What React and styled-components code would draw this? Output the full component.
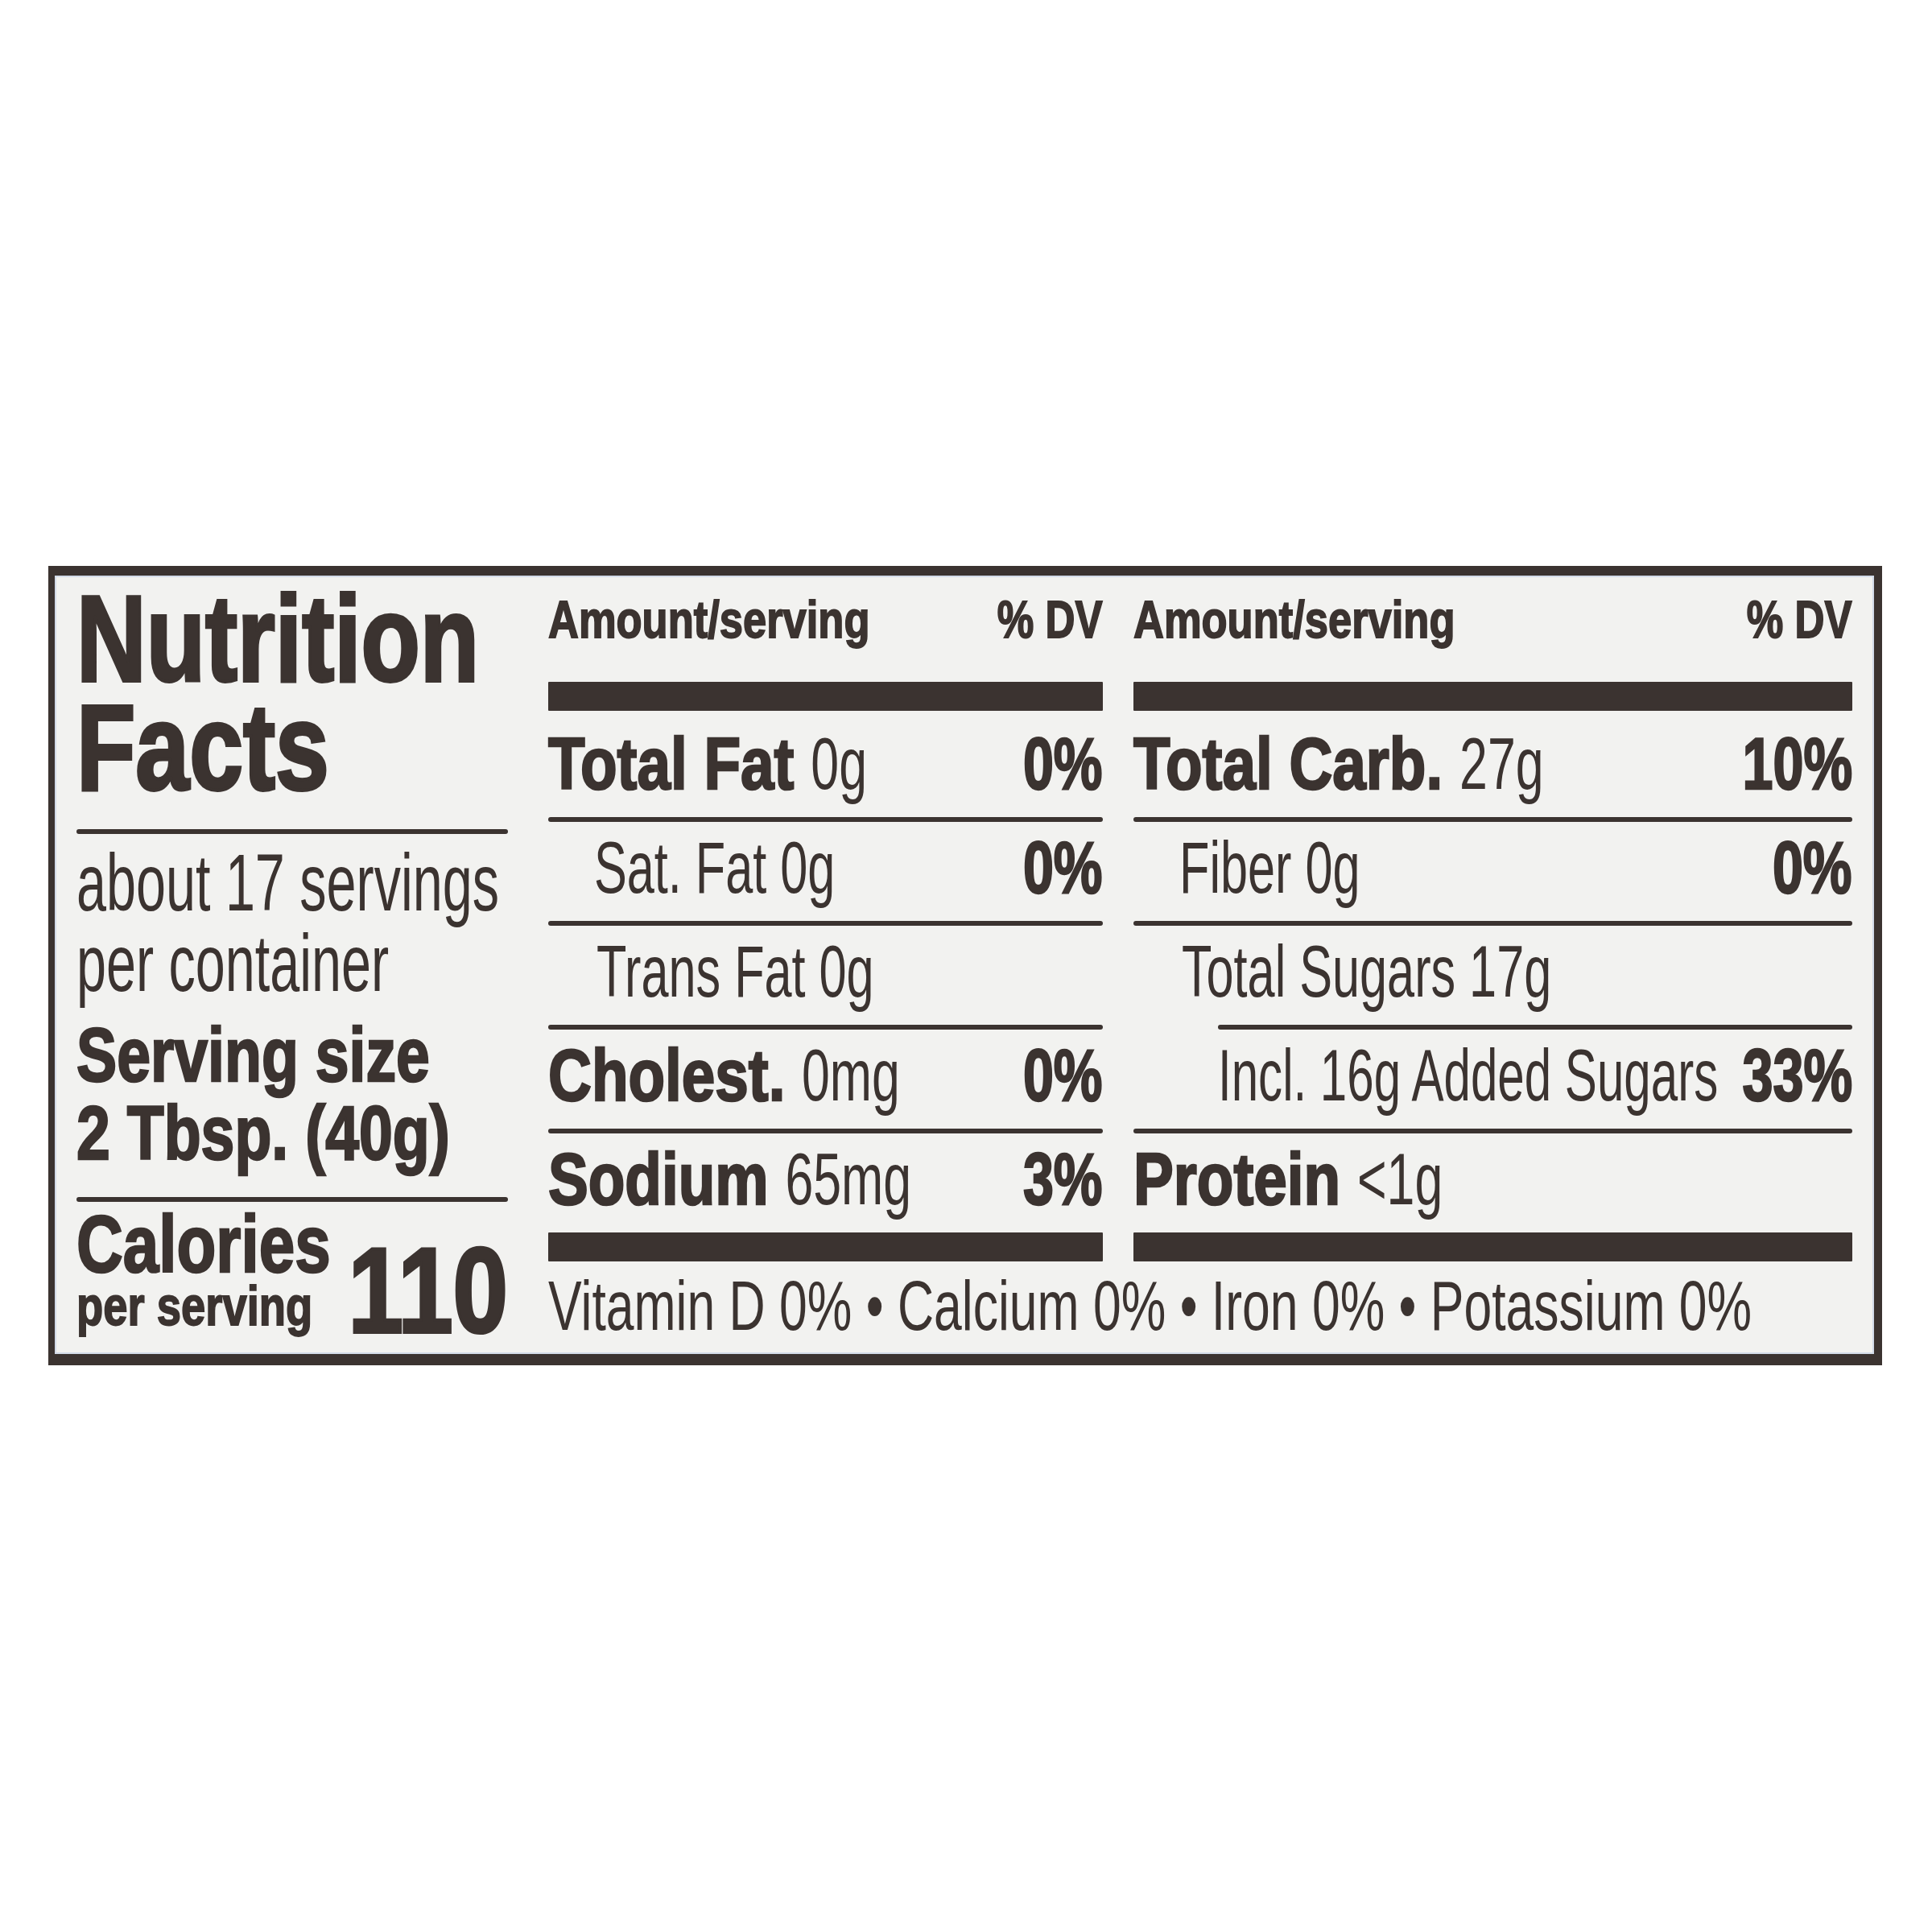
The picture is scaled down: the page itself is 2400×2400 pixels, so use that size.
import React from "react";
import styled, { createGlobalStyle, css } from "styled-components";

const INK = "#3b3330";
const PAPER = "#f2f2f0";

const squeeze = (sx, origin = "left") => css`
  transform: scaleX(${sx});
  transform-origin: ${origin} center;
`;

const heavy = (w) => css`
  font-weight: 700;
  -webkit-text-stroke: ${w}px ${INK};
`;

const GlobalStyle = createGlobalStyle`
  html, body { margin: 0; padding: 0; background: #ffffff; }
  body {
    font-family: "Liberation Sans", Arial, "Helvetica Neue", sans-serif;
    color: ${INK};
  }
`;

const Page = styled.main`
  box-sizing: border-box;
  min-height: 2400px;
  padding: 703px 0 0 60px;
`;

const Label = styled.section`
  box-sizing: border-box;
  width: 2278px;
  height: 993px;
  display: flex;
  gap: 50px;
  padding: 0 27px;
  background: ${PAPER};
  border-style: solid;
  border-color: ${INK};
  border-width: 12px 10px 14px 8px;
  box-shadow: inset 0 0 0 2px #d3dbe8;
  color: ${INK};
  font-family: "Liberation Sans", Arial, "Helvetica Neue", sans-serif;
  overflow: hidden;
`;

/* ---------- shared ---------- */

const Rule = styled.div`
  height: ${(p) => (p.$heavy ? 36 : 6)}px;
  margin-left: ${(p) => p.$indent || 0}px;
  margin-top: ${(p) => p.$mt || 0}px;
  margin-bottom: ${(p) => p.$mb || 0}px;
  background: ${INK};
  border-radius: ${(p) => (p.$heavy ? 1 : 3)}px;
  flex-shrink: 0;
`;

/* regular-weight run inside a bold (already squeezed) line */
const Light = styled.span`
  display: inline-block;
  font-weight: 400;
  -webkit-text-stroke: 0;
  white-space: nowrap;
  ${(p) => squeeze(p.$sx || 0.87)}
`;

/* ---------- left column ---------- */

const LeftCol = styled.div`
  width: 536px;
  flex-shrink: 0;
  display: flex;
  flex-direction: column;
  padding-top: 11px;
`;

const Title = styled.h1`
  margin: 0;
  font-size: 152px;
  line-height: 135px;
  white-space: nowrap;
  ${heavy(4)}
  ${squeeze(0.79)}
`;

const ServingsText = styled.div`
  margin-top: 10px;
  font-size: 100px;
  line-height: 100px;
  white-space: nowrap;
  ${squeeze(0.665)}
`;

const ServingSize = styled.div`
  margin-top: 16px;
  font-size: 94px;
  line-height: 97px;
  white-space: nowrap;
  ${heavy(2.5)}
  ${squeeze(0.8)}
`;

const CaloriesRow = styled.div`
  margin-top: 8px;
  display: flex;
  justify-content: space-between;
  align-items: flex-end;
`;

const CaloriesStack = styled.div`
  flex: 1 1 0;
  min-width: 0;
  display: flex;
  flex-direction: column;
  white-space: nowrap;
  ${heavy(2.5)}
  ${squeeze(0.8)}
`;

const CalTitle = styled.span`
  font-size: 100px;
  line-height: 88px;
`;

const CalSub = styled.span`
  font-size: 68px;
  line-height: 66px;
  -webkit-text-stroke-width: 1.8px;
`;

const CalValue = styled.span`
  display: block;
  flex: 0 0 auto;
  font-size: 150px;
  line-height: 104px;
  ${heavy(4)}
  ${squeeze(0.82, "right")}
`;

/* ---------- facts area ---------- */

const FactsArea = styled.div`
  width: 1620px;
  display: grid;
  grid-template-columns: 689px 893px;
  column-gap: 38px;
  align-content: start;
`;

const NutrientColumn = styled.div`
  display: flex;
  flex-direction: column;
  padding-top: 23px;
`;

const HeadRow = styled.div`
  display: flex;
  justify-content: space-between;
  font-size: 64px;
  line-height: 64px;
  white-space: nowrap;
  margin-bottom: 45px;
  ${heavy(1.8)}
`;

const HeadCell = styled.span`
  display: block;
  ${(p) => squeeze(p.$right ? 0.8 : 0.82, p.$right ? "right" : "left")}
`;

const Row = styled.div`
  display: grid;
  grid-template-columns: minmax(0, 1fr) auto;
  padding-left: ${(p) => p.$indent || 0}px;
  padding-bottom: 10px;
  font-size: 91px;
  line-height: 113px;
  white-space: nowrap;
`;

const Name = styled.span`
  display: block;
  min-width: 0;
  ${heavy(2.5)}
  ${squeeze(0.82)}
`;

const Pct = styled.span`
  display: block;
  text-align: right;
  ${heavy(2.5)}
  ${squeeze(0.75, "right")}
`;

const Footer = styled.div`
  grid-column: 1 / -1;
  margin-top: 11px;
  font-size: 88px;
  line-height: 88px;
  white-space: nowrap;
  ${squeeze(0.71)}
`;

const middle = [
  { bold: "Total Fat", value: "0g", pct: "0%" },
  { value: "Sat. Fat 0g", pct: "0%", indent: 57 },
  { value: "Trans Fat 0g", indent: 60 },
  { bold: "Cholest.", value: "0mg", pct: "0%" },
  { bold: "Sodium", value: "65mg", pct: "3%" },
];

const right = [
  { bold: "Total Carb.", value: "27g", pct: "10%" },
  { value: "Fiber 0g", pct: "0%", indent: 57 },
  { value: "Total Sugars 17g", indent: 60, ruleIndent: 105 },
  { value: "Incl. 16g Added Sugars", pct: "33%", indent: 105, sx: 0.805 },
  { bold: "Protein", value: "<1g" },
];

function Column({ rows }) {
  return (
    <NutrientColumn>
      <HeadRow>
        <HeadCell>Amount/serving</HeadCell>
        <HeadCell $right>% DV</HeadCell>
      </HeadRow>
      <Rule $heavy $mb={9} />
      {rows.map((r, i) => (
        <React.Fragment key={i}>
          <Row $indent={r.indent}>
            <Name>
              {r.bold ? `${r.bold} ` : ""}
              <Light $sx={r.sx || (r.bold ? 0.84 : 0.82)}>{r.value}</Light>
            </Name>
            <Pct>{r.pct || ""}</Pct>
          </Row>
          {i < rows.length - 1 ? <Rule $indent={r.ruleIndent} /> : <Rule $heavy />}
        </React.Fragment>
      ))}
    </NutrientColumn>
  );
}

export default function App() {
  return (
    <>
      <GlobalStyle />
      <Page>
        <Label>
          <LeftCol>
            <Title>
              Nutrition
              <br />
              Facts
            </Title>
            <Rule $mt={34} />
            <ServingsText>
              about 17 servings
              <br />
              per container
            </ServingsText>
            <ServingSize>
              Serving size
              <br />
              2 Tbsp. (40g)
            </ServingSize>
            <Rule $mt={31} />
            <CaloriesRow>
              <CaloriesStack>
                <CalTitle>Calories</CalTitle>
                <CalSub>per serving</CalSub>
              </CaloriesStack>
              <CalValue>110</CalValue>
            </CaloriesRow>
          </LeftCol>
          <FactsArea>
            <Column rows={middle} />
            <Column rows={right} />
            <Footer>Vitamin D 0% • Calcium 0% • Iron 0% • Potassium 0%</Footer>
          </FactsArea>
        </Label>
      </Page>
    </>
  );
}
